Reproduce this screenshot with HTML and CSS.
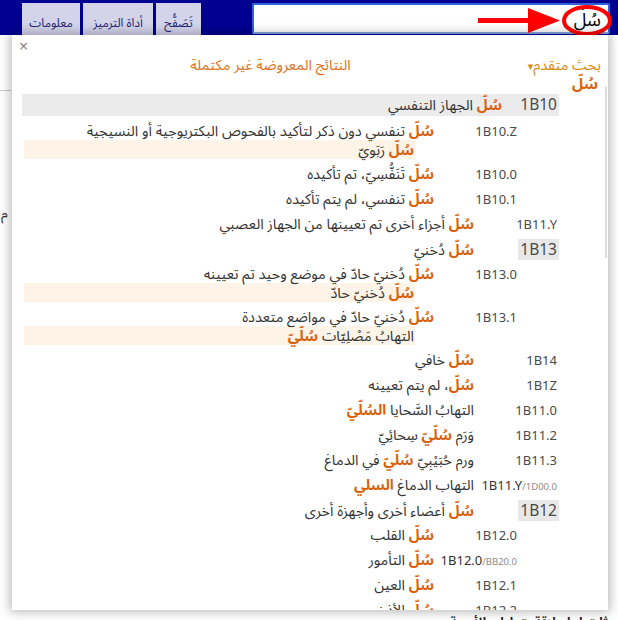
FILE: index.html
```html
<!DOCTYPE html>
<html lang="ar">
<head>
<meta charset="utf-8">
<title>ICD-11 Coding Tool</title>
<link rel="stylesheet" href="styles.css">
</head>
<body>
<header class="topbar">
  <nav class="tabs">
    <div class="tab tab-info">معلومات</div>
    <div class="tab tab-tool">أداة الترميز</div>
    <div class="tab tab-browse">تَصَفُّح</div>
  </nav>
  <div class="search"><span class="search-text">سُلّ</span></div>
  <svg class="annot" width="150" height="40" viewBox="0 0 150 40">
    <rect x="8" y="18" width="54" height="5" fill="#f00"/>
    <polygon points="58,8 90,20.5 58,33" fill="#f00"/>
    <ellipse cx="117" cy="20.5" rx="23" ry="13.5" fill="none" stroke="#f00" stroke-width="4"/>
  </svg>
</header>

<main class="page">
  <div class="page-rule"></div>
  <div class="page-char">م</div>
  <p class="page-bottom">ثات لها علاقة بتعاطي الأدوية</p>
</main>

<section class="popup">
  <div class="close">×</div>
  <div class="popup-head">
    <span class="advanced">بحث متقدم<span class="caret">▾</span></span>
    <span class="notice">النتائج المعروضة غير مكتملة</span>
  </div>
  <div class="query">سُلّ</div>
  <div class="scroll-thumb"></div>
  <div class="list">
    <div class="row row-block"><span class="cell cell-block"><span class="code code-big">1B10</span></span><span class="title"><b class="hl">سُلّ</b> الجهاز التنفسي</span></div>

    <div class="row row-l2"><span class="cell"><span class="code">1B10.Z</span></span><span class="title"><b class="hl">سُلّ</b> تنفسي دون ذكر لتأكيد بالفحوص البكتريوجية أو النسيجية</span></div>
    <div class="sub"><b class="hl">سُلّ</b> رَبَويّ</div>

    <div class="row row-l2"><span class="cell"><span class="code">1B10.0</span></span><span class="title"><b class="hl">سُلّ</b> تَنَفُّسِيّ، تم تأكيده</span></div>
    <div class="row row-l2"><span class="cell"><span class="code">1B10.1</span></span><span class="title"><b class="hl">سُلّ</b> تنفسي، لم يتم تأكيده</span></div>
    <div class="row"><span class="cell"><span class="code">1B11.Y</span></span><span class="title"><b class="hl">سُلّ</b> أجزاء أخرى تم تعيينها من الجهاز العصبي</span></div>
    <div class="row"><span class="cell"><span class="code code-big code-box">1B13</span></span><span class="title"><b class="hl">سُلّ</b> دُخنيّ</span></div>

    <div class="row row-l2"><span class="cell"><span class="code">1B13.0</span></span><span class="title"><b class="hl">سُلّ</b> دُخنيّ حادّ في موضع وحيد تم تعيينه</span></div>
    <div class="sub"><b class="hl">سُلّ</b> دُخنيّ حادّ</div>

    <div class="row row-l2"><span class="cell"><span class="code">1B13.1</span></span><span class="title"><b class="hl">سُلّ</b> دُخنيّ حادّ في مواضع متعددة</span></div>
    <div class="sub">التهابُ مَصْلِيّات <b class="hl">سُلّيّ</b></div>

    <div class="row"><span class="cell"><span class="code">1B14</span></span><span class="title"><b class="hl">سُلّ</b> خافي</span></div>
    <div class="row"><span class="cell"><span class="code">1B1Z</span></span><span class="title"><b class="hl">سُلّ</b>، لم يتم تعيينه</span></div>
    <div class="row"><span class="cell"><span class="code">1B11.0</span></span><span class="title">التهابُ السَّحايا <b class="hl">السُلّيّ</b></span></div>
    <div class="row"><span class="cell"><span class="code">1B11.2</span></span><span class="title">وَرَم <b class="hl">سُلّيّ</b> سِحائِيّ</span></div>
    <div class="row"><span class="cell"><span class="code">1B11.3</span></span><span class="title">ورم حُبَيْبِيّ <b class="hl">سُلّيّ</b> في الدماغ</span></div>
    <div class="row"><span class="cell"><span class="code code-strong">1B11.Y<small class="code-alt">/1D00.0</small></span></span><span class="title">التهاب الدماغ <b class="hl">السلي</b></span></div>
    <div class="row"><span class="cell"><span class="code code-big code-box">1B12</span></span><span class="title"><b class="hl">سُلّ</b> أعضاء أخرى وأجهزة أخرى</span></div>

    <div class="row row-l2"><span class="cell"><span class="code">1B12.0</span></span><span class="title"><b class="hl">سُلّ</b> القلب</span></div>
    <div class="row row-l2"><span class="cell"><span class="code code-strong">1B12.0<small class="code-alt">/BB20.0</small></span></span><span class="title"><b class="hl">سُلّ</b> التأمور</span></div>
    <div class="row row-l2"><span class="cell"><span class="code">1B12.1</span></span><span class="title"><b class="hl">سُلّ</b> العين</span></div>
    <div class="row row-l2"><span class="cell"><span class="code">1B12.2</span></span><span class="title"><b class="hl">سُلّ</b> الأذن</span></div>
  </div>
</section>
</body>
</html>
```

FILE: styles.css
```css
* { box-sizing: border-box; }

html, body {
  margin: 0;
  padding: 0;
  width: 618px;
  height: 620px;
  overflow: hidden;
  background: #fff;
  font-family: "Noto Sans", "Noto Sans Arabic", "DejaVu Sans", sans-serif;
  color: #333;
}

/* ---------- top bar ---------- */
.topbar {
  position: relative;
  height: 35px;
  background: #000091;
  display: flex;
  align-items: flex-start;
}

.tabs {
  display: flex;
  gap: 3px;
  margin-left: 22px;
  margin-top: 3px;
}

.tab {
  height: 32px;
  background: #d3d3ea;
  color: #1e1e6e;
  font-size: 12px;
  line-height: 26px;
  padding-top: 7px;
  text-align: center;
  direction: rtl;
}
.tab-info { width: 58px; }
.tab-tool { width: 70px; }
.tab-browse { width: 45px; }

.search {
  margin-left: auto;
  margin-right: 8px;
  margin-top: 3px;
  width: 358px;
  height: 31px;
  background: #fff;
  border: 2px solid #2f62d6;
  border-bottom-color: #86a6e6;
  border-radius: 2px;
  direction: rtl;
  padding-right: 7px;
  display: flex;
  align-items: center;
}
.search-text {
  font-size: 18px;
  color: #000;
  line-height: 1;
}

.annot {
  position: absolute;
  left: 470px;
  top: 0;
}

/* ---------- page behind ---------- */
.page {
  display: flex;
  flex-direction: column;
  height: 585px;
}
.page-rule {
  width: 11px;
  height: 1px;
  background: #c8c8c8;
  margin-top: 55px;
}
.page-char {
  margin-top: 108px;
  margin-left: 1px;
  font-size: 14px;
  color: #333;
}
.page-bottom {
  margin: auto 10px 0 0;
  direction: rtl;
  font-size: 13px;
  font-weight: bold;
  color: #222;
  transform: translateY(17px);
}

/* ---------- popup ---------- */
.popup {
  position: absolute;
  left: 12px;
  top: 35px;
  width: 596px;
  height: 575px;
  background: #fff;
  box-shadow: 0 0 10px 2px rgba(0, 0, 0, 0.28);
  overflow: hidden;
}

.close {
  height: 20px;
  padding-left: 7px;
  font-size: 16px;
  line-height: 22px;
  color: #8a8a8a;
}

.popup-head {
  display: flex;
  direction: rtl;
  gap: 177px;
  padding-right: 7px;
  height: 18px;
  font-size: 14.5px;
  line-height: 18px;
}
.advanced { color: #d98a10; }
.caret { font-size: 11px; }
.notice { color: #e07224; }

.query {
  direction: rtl;
  padding-right: 10px;
  height: 20px;
  font-size: 15px;
  font-weight: bold;
  line-height: 20px;
  color: #d9620c;
}

.scroll-thumb {
  position: absolute;
  left: 593px;
  top: 52px;
  width: 2px;
  height: 171px;
  background: #dcdcdc;
}

.list {
  direction: rtl;
  margin: 0 49px 0 10px;
}

.row {
  display: flex;
  align-items: baseline;
  height: 25px;
  padding-top: 3px;
  line-height: 19px;
  white-space: nowrap;
}
.row-l2 { padding-right: 40px; }

.row-block {
  background: #ebebeb;
  height: 22px;
  margin: 1px 0 2px;
  padding-top: 1px;
}

.cell {
  flex: none;
  width: 85px;
}
.cell-block { width: 57px; }

.code {
  display: inline-block;
  direction: ltr;
  padding: 0 2px;
  font-size: 13px;
  color: #4a4a4a;
}
.code-big {
  font-size: 15.5px;
}
.code-box {
  background: #e8e8e8;
  line-height: 21px;
}
.code-strong { color: #333; }
.code-alt {
  font-size: 9.5px;
  color: #8a8a8a;
}

.title {
  font-size: 14.5px;
  color: #333;
}

.hl {
  color: #d9620c;
  font-weight: bold;
}

.sub {
  height: 19px;
  margin: -3px 144px 2px 2px;
  background: #fdf3e7;
  font-size: 14.5px;
  line-height: 19px;
  padding-right: 1px;
  white-space: nowrap;
}
```
